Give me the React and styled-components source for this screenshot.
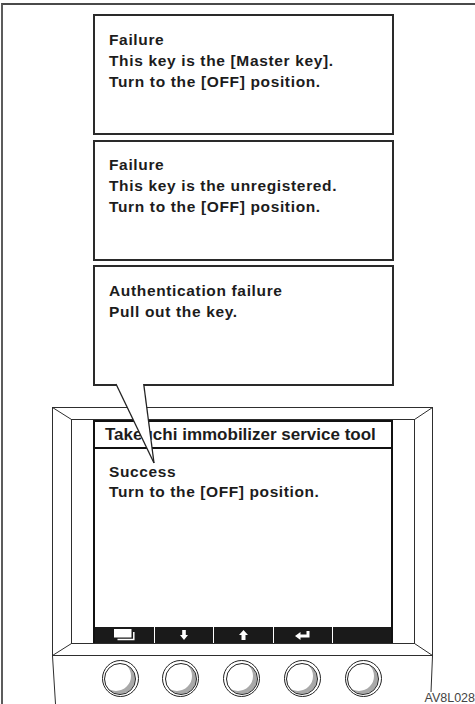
import React from "react";
import styled, { createGlobalStyle } from "styled-components";

const GlobalStyle = createGlobalStyle`
  html, body { margin: 0; padding: 0; background: #fff; }
  body {
    width: 475px;
    height: 704px;
    overflow: hidden;
    font-family: "Liberation Sans", Arial, Helvetica, sans-serif;
    color: #1c1c1c;
  }
  #root { padding-top: 3px; }
`;

const Frame = styled.div`
  position: relative;
  box-sizing: border-box;
  margin-left: 1px;
  height: 701px;
  border-top: 2px solid #4a4a4a;
  border-left: 2px solid #5c5c5c;
  display: flex;
  flex-direction: column;
`;

const Stack = styled.div`
  margin: 9px 0 0 90px;
  width: 301px;
  display: flex;
  flex-direction: column;
  gap: 4.5px;
`;

const Bubble = styled.div`
  position: relative;
  box-sizing: border-box;
  height: 121px;
  border: 2px solid #2a2a2a;
  padding: 12.5px 8px 0 14px;
  font-size: 15.5px;
  font-weight: 700;
  letter-spacing: 0.65px;
  line-height: 21px;
  white-space: nowrap;
`;

const Line = styled.div``;

const Tail = styled.svg`
  position: absolute;
  left: 20px;
  top: 100%;
  width: 42px;
  height: 81px;
  overflow: visible;
  z-index: 5;
`;

const Device = styled.div`
  margin: 21px 0 0 49px;
  width: 381px;
  display: flex;
  flex-direction: column;
`;

const Bezel = styled.div`
  position: relative;
  box-sizing: border-box;
  height: 249px;
  border: 1px solid #2e2e2e;
  padding: 11px 17px 11px 18px;
  display: flex;
`;

const Overlay = styled.svg`
  position: absolute;
  pointer-events: none;
  overflow: visible;
`;

const Inner = styled.div`
  flex: 1;
  border: 1px solid #2e2e2e;
  padding: 0 21px;
  display: flex;
`;

const Screen = styled.div`
  flex: 1;
  display: flex;
  flex-direction: column;
  border: 2px solid #111;
  border-bottom: none;
`;

const TitleBar = styled.div`
  height: 25px;
  border-bottom: 2px solid #111;
  padding-left: 10px;
  font-size: 17px;
  font-weight: 700;
  line-height: 25px;
  white-space: nowrap;
`;

const ScreenBody = styled.div`
  flex: 1;
  padding: 12.5px 0 0 14px;
  font-size: 15.5px;
  font-weight: 700;
  letter-spacing: 0.6px;
  line-height: 20px;
  white-space: nowrap;
`;

const SoftkeyBar = styled.div`
  height: 16px;
  background: #1a1a1a;
  display: grid;
  grid-template-columns: repeat(5, 1fr);
`;

const Softkey = styled.div`
  display: flex;
  align-items: center;
  justify-content: center;
  & + & { border-left: 1px solid #fff; }
  svg { display: block; }
`;

const Body = styled.div`
  position: relative;
  box-sizing: border-box;
  height: 48px;
  padding: 4px 0 0 49.5px;
  display: flex;
  align-items: flex-start;
  gap: 23.8px;
`;

const Knob = styled.div`
  box-sizing: border-box;
  width: 37px;
  height: 37px;
  border-radius: 50%;
  border: 1.5px solid #222;
  padding: 1.5px;
  background: #fff;
`;

const KnobFace = styled.div`
  box-sizing: border-box;
  width: 100%;
  height: 100%;
  border-radius: 50%;
  border: 1px solid #222;
  box-shadow: inset -4px -3px 0 0 #a9a9a9;
`;

const Caption = styled.div`
  position: absolute;
  right: 0;
  bottom: -1px;
  font-size: 12.5px;
  line-height: 13px;
  color: #444;
`;

const bubbles = [
  ["Failure", "This key is the [Master key].", "Turn to the [OFF] position."],
  ["Failure", "This key is the unregistered.", "Turn to the [OFF] position."],
  ["Authentication failure", "Pull out the key."],
];

const MenuIcon = () => (
  <svg width="22" height="12" viewBox="0 0 22 12">
    <rect x="0" y="0" width="17.5" height="8.5" fill="#fff" />
    <polyline points="19.8,3 19.8,10.6 3.5,10.6" fill="none" stroke="#fff" strokeWidth="1.5" />
  </svg>
);

const DownIcon = () => (
  <svg width="8" height="10" viewBox="0 0 8 10">
    <path d="M2.2 0 H5.8 V5 H8 L4 10 L0 5 H2.2 Z" fill="#fff" />
  </svg>
);

const UpIcon = () => (
  <svg width="9" height="10" viewBox="0 0 9 10">
    <path d="M4.5 0 L9 5 H6.5 V10 H2.5 V5 H0 Z" fill="#fff" />
  </svg>
);

const ReturnIcon = () => (
  <svg width="15" height="9" viewBox="0 0 15 9">
    <path d="M11.5 0 H14.5 V6.5 H5.5 V9 L0 5 L5.5 1 V3.5 H11.5 Z" fill="#fff" />
  </svg>
);

export default function App() {
  return (
    <>
      <GlobalStyle />
      <Frame>
        <Stack>
          {bubbles.map((lines, i) => (
            <Bubble key={i}>
              {lines.map((l) => (
                <Line key={l}>{l}</Line>
              ))}
              {i === bubbles.length - 1 && (
                <Tail viewBox="0 0 42 81">
                  <polygon points="1,0 28.7,0 39,79" fill="#fff" />
                  <line x1="1" y1="0" x2="39" y2="79" stroke="#222" strokeWidth="1.3" />
                  <line x1="28.7" y1="0" x2="39" y2="79" stroke="#222" strokeWidth="1.3" />
                </Tail>
              )}
            </Bubble>
          ))}
        </Stack>

        <Device>
          <Bezel>
            <Overlay
              style={{ top: -1, left: -1 }}
              width="381"
              height="249"
              viewBox="0 0 381 249"
            >
              <g stroke="#2e2e2e" strokeWidth="1">
                <line x1="0.5" y1="0.5" x2="19.5" y2="12.5" />
                <line x1="380.5" y1="0.5" x2="362.5" y2="12.5" />
                <line x1="0.5" y1="248.5" x2="19.5" y2="236.5" />
                <line x1="380.5" y1="248.5" x2="362.5" y2="236.5" />
              </g>
            </Overlay>
            <Inner>
              <Screen>
                <TitleBar>Takeuchi immobilizer service tool</TitleBar>
                <ScreenBody>
                  <Line>Success</Line>
                  <Line>Turn to the [OFF] position.</Line>
                </ScreenBody>
                <SoftkeyBar>
                  <Softkey>
                    <MenuIcon />
                  </Softkey>
                  <Softkey>
                    <DownIcon />
                  </Softkey>
                  <Softkey>
                    <UpIcon />
                  </Softkey>
                  <Softkey>
                    <ReturnIcon />
                  </Softkey>
                  <Softkey />
                </SoftkeyBar>
              </Screen>
            </Inner>
          </Bezel>
          <Body>
            <Overlay
              style={{ top: 0, left: 0 }}
              width="381"
              height="48"
              viewBox="0 0 381 48"
            >
              <g stroke="#2e2e2e" strokeWidth="1">
                <line x1="0.5" y1="0" x2="3.5" y2="48" />
                <line x1="380.5" y1="0" x2="379" y2="36" />
              </g>
            </Overlay>
            {[0, 1, 2, 3, 4].map((k) => (
              <Knob key={k}>
                <KnobFace />
              </Knob>
            ))}
          </Body>
        </Device>
        <Caption>AV8L028</Caption>
      </Frame>
    </>
  );
}
